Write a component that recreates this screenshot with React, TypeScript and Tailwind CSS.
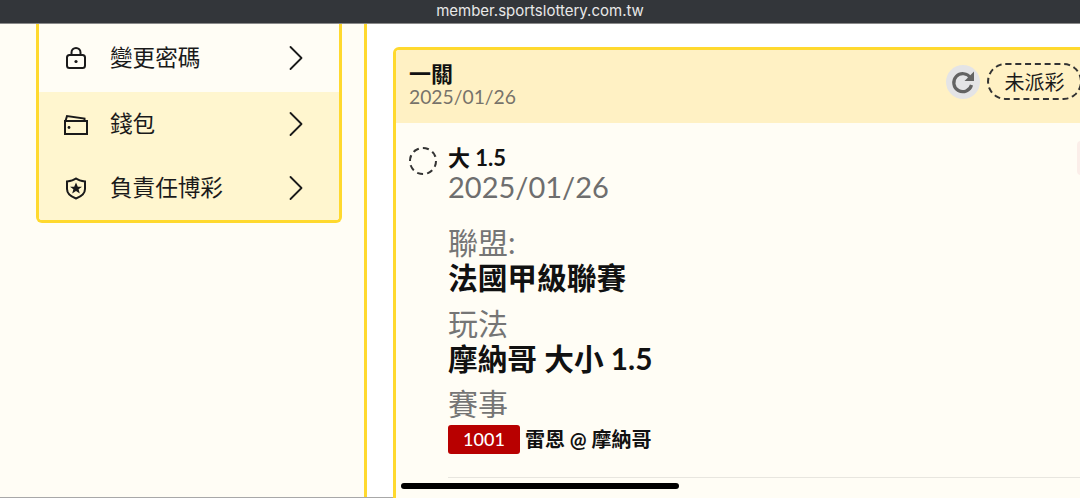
import React from 'react';
import { ChevronRight } from 'lucide-react';

const FONT = "font-['Lato','Noto_Sans_CJK_TC',sans-serif]";

const LockIcon = () => (
  <svg width="24" height="24" viewBox="0 0 24 24" fill="none" stroke="#1a1a1a" strokeWidth="2">
    <rect x="3" y="9" width="18" height="13" rx="2.5" />
    <path d="M7.5 9V6.5a4.5 4.5 0 0 1 9 0V9" />
    <circle cx="12" cy="15.5" r="1.6" fill="#1a1a1a" stroke="none" />
  </svg>
);

const WalletIcon = () => (
  <svg width="26" height="24" viewBox="0 0 26 24" fill="none" stroke="#1a1a1a" strokeWidth="2">
    <path d="M2 9V22H24V9H2Z" />
    <path d="M2.5 9L4 4L21.5 6.5V9" />
    <circle cx="6" cy="15.5" r="1.4" fill="#1a1a1a" stroke="none" />
  </svg>
);

const ShieldIcon = () => (
  <svg width="24" height="24" viewBox="0 0 24 24" fill="none" stroke="#1a1a1a" strokeWidth="2">
    <path d="M3 5.5C7 5 10 4 12 2.5C14 4 17 5 21 5.5V13C21 18 16 21 12 22.5C8 21 3 18 3 13V5.5Z" />
    <path
      d="M12 6.5L13.8 10.7H18L14.6 13.3L15.8 17.5L12 15.1L8.2 17.5L9.4 13.3L6 10.7H10.2Z"
      fill="#1a1a1a"
      stroke="none"
    />
  </svg>
);

const RefreshIcon = () => (
  <svg width="26" height="26" viewBox="0 0 26 26" fill="none">
    <path d="M20.5 9A9 9 0 1 0 21.5 16" stroke="#636363" strokeWidth="3.2" />
    <path d="M24 2.5V12H14.5Z" fill="#636363" />
  </svg>
);

const MENU = [
  { label: '變更密碼', icon: <LockIcon />, bg: 'bg-[#fffdf5]', height: 'h-[68px]' },
  { label: '錢包', icon: <WalletIcon />, bg: 'bg-[#fff6cf]', height: 'h-[64px]' },
  { label: '負責任博彩', icon: <ShieldIcon />, bg: 'bg-[#fff6cf]', height: 'h-[64px]' },
];

const DETAILS = [
  { label: '聯盟:', value: '法國甲級聯賽' },
  { label: '玩法', value: '摩納哥 大小 1.5' },
];

export default function App() {
  return (
    <div className={`${FONT} relative flex h-[498px] w-[1080px] flex-col overflow-hidden bg-white`}>
      {/* browser address bar */}
      <div className="flex h-[24px] shrink-0 items-center justify-center border-b border-[#8a8a8a] bg-[#33363a] font-['Inter',sans-serif] text-[15px] text-[#e8e8e8]">
        member.sportslottery.com.tw
      </div>

      <div className="flex min-h-0 flex-1 border-b border-[#a8a8a8]">
        {/* sidebar */}
        <div className="w-[364px] shrink-0 bg-[#fffdf5] pl-[36px]">
          <div className="w-[306px] overflow-hidden rounded-b-[6px] border-x-[3px] border-b-[3px] border-[#ffd92e]">
            {MENU.map((item) => (
              <div key={item.label} className={`flex items-center ${item.height} ${item.bg}`}>
                <div className="flex w-[71px] justify-center pl-[2px]">{item.icon}</div>
                <span className="-mt-[1px] flex-1 text-[22.6px] text-[#1a1a1a]">{item.label}</span>
                <ChevronRight className="mr-[21px] text-[#1a1a1a]" size={44} strokeWidth={1} />
              </div>
            ))}
          </div>
        </div>

        {/* main */}
        <div className="min-w-0 flex-1 border-l-[3px] border-[#ffd92e] pl-[26px] pt-[23px]">
          <div className="relative h-[480px] w-[700px] overflow-hidden rounded-[6px] border-[3px] border-[#ffd92e] bg-[#fffdf5]">
            <div className="flex h-[73px] items-start justify-between bg-[#fff1c4] pl-[13px]">
              <div className="pt-[11px]">
                <div className="text-[22px] font-bold leading-[26px] text-[#111]">一關</div>
                <div className="-mt-[1px] text-[19.3px] leading-[21px] text-[#77736a]">2025/01/26</div>
              </div>
              <div className="mr-[8px] mt-[13px] flex items-center gap-[7px]" style={{ width: 136 }}>
                <div className="flex h-[34px] w-[34px] items-center justify-center rounded-full bg-[#e4e4e6]">
                  <RefreshIcon />
                </div>
                <div className="flex h-[37px] w-[95px] shrink-0 items-center justify-center rounded-full border-2 border-dashed border-[#333] text-[20px] text-[#1a1a1a]">
                  未派彩
                </div>
              </div>
            </div>

            <div className="flex pl-[13px] pt-[23px]">
              <div className="mr-[12px] mt-[1px] h-[28px] w-[28px] shrink-0 rounded-full border-2 border-dashed border-[#333]" />
              <div className="-ml-[1px] flex-1">
                <div className="text-[22px] font-bold leading-[24px] text-[#111]">大 1.5</div>
                <div className="-mt-[1px] text-[29px] leading-[36px] text-[#6e6e6e]">2025/01/26</div>

                <div className="mt-[19px] flex flex-col gap-[9px]">
                  {DETAILS.map((d) => (
                    <div key={d.label}>
                      <div className="text-[30px] leading-[36px] text-[#757575]">{d.label}</div>
                      <div className="text-[29.7px] font-bold leading-[36px] text-[#111]">{d.value}</div>
                    </div>
                  ))}
                </div>

                <div className="mt-[8px] text-[30px] leading-[36px] text-[#757575]">賽事</div>
                <div className="mt-[3px] flex items-center gap-[5px]">
                  <span className="flex h-[29px] w-[72px] items-center justify-center rounded-[3px] bg-[#b80000] text-[18px] font-medium text-white">
                    1001
                  </span>
                  <span className="text-[20px] font-bold text-[#111]">雷恩 @ 摩納哥</span>
                </div>
                <div className="mt-[23px] border-t border-[#e8e6df]" />
              </div>
            </div>
          </div>
        </div>
      </div>

      {/* chip cut off at the right edge */}
      <div className="absolute left-[1077px] top-[141px] h-[34px] w-[10px] rounded-[4px] bg-[#fbeee9]" />
      {/* scrollbar overlay */}
      <div className="absolute left-[401px] top-[483px] h-[6px] w-[278px] rounded-full bg-black" />
    </div>
  );
}
